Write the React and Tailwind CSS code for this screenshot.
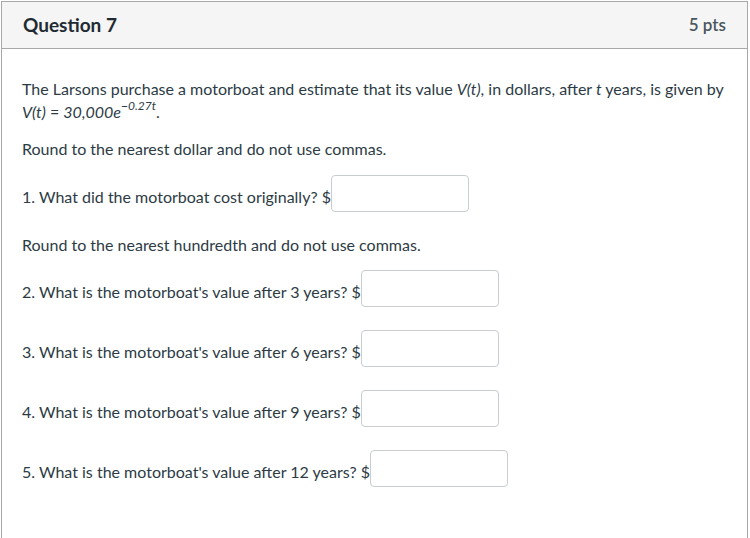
import React from "react";

const rows = [
  { label: "2. What is the motorboat's value after 3 years? $", top: "mt-[14px]" },
  { label: "3. What is the motorboat's value after 6 years? $", top: "mt-[23px]" },
  { label: "4. What is the motorboat's value after 9 years? $", top: "mt-[23px]" },
  { label: "5. What is the motorboat's value after 12 years? $", top: "mt-[23px]" },
];

const AnswerRow = ({ label, top }) => (
  <div className={`flex items-center h-[37px] ${top}`}>
    <span className="pt-[6px] whitespace-nowrap">{label}</span>
    <input
      type="text"
      className="w-[138px] h-[37px] border border-[#c7cdd1] rounded-[4px] bg-white outline-none"
    />
  </div>
);

const App = () => {
  return (
    <div
      className="w-[750px] h-[538px] bg-white overflow-hidden pt-[1px] pl-[1px]"
      style={{ fontFamily: "Lato, 'Open Sans', sans-serif" }}
    >
      <div className="w-[747px] h-[560px] border border-[#a8a8a8] text-[#2d3b45]">
        {/* Header */}
        <div className="h-[47px] bg-[#f5f5f5] border-b border-[#a8a8a8] flex items-center justify-between pl-[21px] pr-[21px]">
          <h2 className="text-[19px] font-bold text-[#1f2a33]">Question 7</h2>
          <span className="text-[17px] font-semibold text-[#4a555d]">5 pts</span>
        </div>

        {/* Body */}
        <div className="pl-[20px] pr-[20px] text-[16px] leading-[23px]">
          <p className="mt-[28px]">
            The Larsons purchase a motorboat and estimate that its value <i>V(t)</i>, in dollars, after <i>t</i> years, is given by{" "}
            <i>V(t)</i> = <i>30,000e</i>
            <sup className="text-[12px] italic top-[-0.7em]">−0.27t</sup>.
          </p>
          <p className="mt-[14px]">Round to the nearest dollar and do not use commas.</p>
          <div className="flex items-center h-[37px] mt-[15px]">
            <span className="pt-[6px] whitespace-nowrap">1. What did the motorboat cost originally? $</span>
            <input
              type="text"
              className="w-[138px] h-[37px] border border-[#c7cdd1] rounded-[4px] bg-white outline-none"
            />
          </div>
          <p className="mt-[21px]">Round to the nearest hundredth and do not use commas.</p>
          {rows.map((r, i) => (
            <AnswerRow key={i} label={r.label} top={r.top} />
          ))}
        </div>
      </div>
    </div>
  );
};

export default App;
